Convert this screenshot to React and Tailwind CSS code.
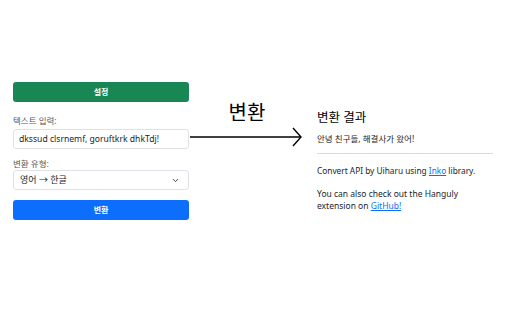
import { ChevronDown } from 'lucide-react'

const font = { fontFamily: '"Noto Sans", "Noto Sans CJK KR", sans-serif' }

function ArrowRight() {
  return (
    <svg width="114" height="22" viewBox="0 0 114 22" fill="none">
      <line x1="0" y1="11" x2="111" y2="11" stroke="#000" strokeWidth="1.4" />
      <polyline points="103,2 111,11 103,20" stroke="#000" strokeWidth="1.4" fill="none" />
    </svg>
  )
}

export default function App() {
  return (
    <div className="w-[512px] h-[320px] bg-white flex items-start text-[#212529]" style={font}>
      {/* 왼쪽 입력 폼 */}
      <div className="ml-[13px] mt-[82px] w-[176px] flex flex-col">
        <button className="h-5 rounded-[3px] bg-[#198754] text-white text-[8px] font-semibold leading-5">
          설정
        </button>

        <label className="mt-[14px] text-[8.5px] leading-[10px] text-[#555]">텍스트 입력:</label>
        <div className="mt-[3px] h-5 rounded-[3px] border border-[#dee2e6] px-[5px] flex items-center text-[8.6px] whitespace-nowrap overflow-hidden">
          dkssud clsrnemf, goruftkrk dhkTdj!
        </div>

        <label className="mt-[10px] text-[8.5px] leading-[10px] text-[#555]">변환 유형:</label>
        <div className="mt-[1px] h-5 rounded-[3px] border border-[#dee2e6] pl-[6px] pr-[8px] flex items-center justify-between text-[9px]">
          <span>영어 → 한글</span>
          <ChevronDown size={9} strokeWidth={2.5} className="text-[#343a40]" />
        </div>

        <button className="mt-[10px] h-5 rounded-[3px] bg-[#0d6efd] text-white text-[8px] font-semibold leading-5">
          변환
        </button>
      </div>

      {/* 가운데 화살표 */}
      <div className="mt-[100px] ml-[1px] w-[114px] flex flex-col items-center">
        <span className="text-[20px] leading-[26px] text-black">변환</span>
        <ArrowRight />
      </div>

      {/* 오른쪽 결과 */}
      <div className="ml-[13px] mt-[110px] w-[176px] flex flex-col">
        <h2 className="text-[12.5px] leading-4 text-black">변환 결과</h2>
        <p className="mt-[7px] text-[8.5px] leading-[12px]">안녕 친구들, 해결사가 왔어!</p>
        <hr className="mt-[8px] border-t border-[#d9dcdf]" />
        <p className="mt-[11px] text-[8.3px] leading-[12px]">
          Convert API by Uiharu using <a className="text-[#0d6efd] underline">Inko</a> library.
        </p>
        <p className="mt-[11px] text-[8.5px] leading-[12px]">
          You can also check out the Hanguly
          <br />
          extension on <a className="text-[#0d6efd] underline">GitHub!</a>
        </p>
      </div>
    </div>
  )
}
